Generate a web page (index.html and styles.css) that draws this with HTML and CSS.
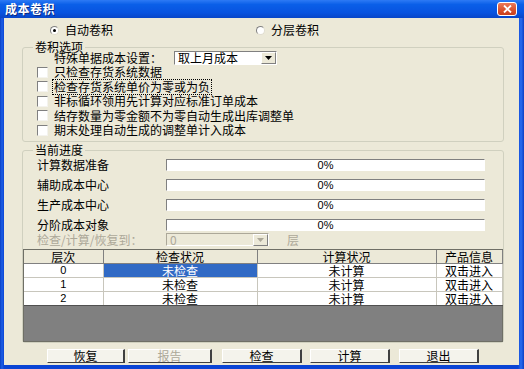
FILE: index.html
```html
<!DOCTYPE html>
<html lang="zh">
<head>
    <meta charset="UTF-8">
    <title>成本卷积</title>
    <link rel="stylesheet" href="styles.css">
</head>
<body>

    <div class="window">
        <!-- Title bar -->
        <div class="titlebar">
            <span class="title">成本卷积</span>
            <span class="close-btn">
                <svg width="9" height="8" viewBox="0 0 9 8"><path d="M1 0.5L8 7.5M8 0.5L1 7.5" stroke="#fff" stroke-width="1.8"/></svg>
            </span>
        </div>

        <div class="client">
            <!-- Mode selection -->
            <div class="mode-row">
                <label class="radio-item first"><span class="radio checked"></span>自动卷积</label>
                <label class="radio-item second"><span class="radio"></span>分层卷积</label>
            </div>

            <!-- Options group -->
            <fieldset class="group options">
                <legend>卷积选项</legend>
                <div class="setting-row">
                    <span class="setting-label">特殊单据成本设置：</span>
                    <div class="combo">
                        <span class="combo-text">取上月成本</span>
                        <span class="combo-arrow"><svg width="7" height="4" viewBox="0 0 7 4"><path d="M0 0H7L3.5 4Z" fill="#000"/></svg></span>
                    </div>
                </div>
                <div class="check-row"><span class="checkbox"></span><span>只检查存货系统数据</span></div>
                <div class="check-row"><span class="checkbox"></span><span class="focused">检查存货系统单价为零或为负</span></div>
                <div class="check-row"><span class="checkbox"></span><span>非标循环领用先计算对应标准订单成本</span></div>
                <div class="check-row"><span class="checkbox"></span><span>结存数量为零金额不为零自动生成出库调整单</span></div>
                <div class="check-row"><span class="checkbox"></span><span>期末处理自动生成的调整单计入成本</span></div>
            </fieldset>

            <!-- Progress group -->
            <fieldset class="group progress">
                <legend>当前进度</legend>
                <div class="progress-row first-row">
                    <span class="progress-label">计算数据准备</span>
                    <div class="bar">0%</div>
                </div>
                <div class="progress-row">
                    <span class="progress-label">辅助成本中心</span>
                    <div class="bar">0%</div>
                </div>
                <div class="progress-row">
                    <span class="progress-label">生产成本中心</span>
                    <div class="bar">0%</div>
                </div>
                <div class="progress-row">
                    <span class="progress-label">分阶成本对象</span>
                    <div class="bar">0%</div>
                </div>
                <div class="level-row">
                    <span class="progress-label">检查/计算/恢复到：</span>
                    <div class="combo disabled">
                        <span class="combo-text">0</span>
                        <span class="combo-arrow"><svg width="7" height="4" viewBox="0 0 7 4"><path d="M0 0H7L3.5 4Z" fill="#ACA899"/></svg></span>
                    </div>
                    <span class="level-unit">层</span>
                </div>

                <div class="grid">
                    <table>
                        <colgroup>
                            <col class="col-level">
                            <col class="col-check">
                            <col class="col-calc">
                            <col class="col-info">
                        </colgroup>
                        <thead>
                            <tr><th>层次</th><th>检查状况</th><th>计算状况</th><th>产品信息</th></tr>
                        </thead>
                        <tbody>
                            <tr><td>0</td><td class="selected">未检查</td><td>未计算</td><td>双击进入</td></tr>
                            <tr><td>1</td><td>未检查</td><td>未计算</td><td>双击进入</td></tr>
                            <tr><td>2</td><td>未检查</td><td>未计算</td><td>双击进入</td></tr>
                        </tbody>
                    </table>
                </div>
            </fieldset>

            <!-- Buttons -->
            <div class="buttons">
                <button class="btn b-restore">恢复</button>
                <button class="btn b-report" disabled>报告</button>
                <button class="btn b-check">检查</button>
                <button class="btn b-calc">计算</button>
                <button class="btn b-exit">退出</button>
            </div>
        </div>
    </div>

</body>
</html>
```

FILE: styles.css
```css
* {
    margin: 0;
    padding: 0;
    box-sizing: border-box;
}

body {
    width: 524px;
    height: 369px;
    overflow: hidden;
    font-family: "Noto Sans CJK SC", "Liberation Sans", sans-serif;
    font-size: 12px;
    line-height: 14px;
    color: #000;
    background: #0842d0;
}

.window {
    width: 524px;
    height: 369px;
    display: flex;
    flex-direction: column;
    background: linear-gradient(90deg, #0a3fc4, #1d5fe6 2px, #0a44d4 4px, #0a44d4 518px, #2a6cf0 521px, #0a3fc4);
}

/* Title bar */
.titlebar {
    height: 18px;
    display: flex;
    align-items: center;
    justify-content: space-between;
    padding: 0 7px 0 5px;
    background: linear-gradient(#2d7af5, #0a5fe8 25%, #0853e0 70%, #0846c8);
}

.title {
    color: #fff;
    font-weight: bold;
    font-size: 12px;
    letter-spacing: 0.5px;
    text-shadow: 1px 1px 0 #0a2a80;
}

.close-btn {
    width: 20px;
    height: 14px;
    display: flex;
    align-items: center;
    justify-content: center;
    background: linear-gradient(#ec7a5a, #d9502c 60%, #c8401e);
    border: 1px solid #fff;
    border-radius: 3px;
}

/* Client area */
.client {
    width: 515px;
    height: 347px;
    margin-left: 4px;
    background: #ece9d8;
}

.mode-row {
    height: 18px;
    margin-top: 3px;
    display: flex;
    align-items: center;
}

.radio-item {
    display: flex;
    align-items: center;
    gap: 6px;
}

.radio-item.first {
    margin-left: 46px;
}

.radio-item.second {
    margin-left: 143px;
}

.radio {
    width: 9px;
    height: 9px;
    border-radius: 50%;
    background: #fff;
    border: 1px solid;
    border-color: #808080 #e0ddd0 #e0ddd0 #808080;
    display: flex;
    align-items: center;
    justify-content: center;
}

.radio.checked::after {
    content: "";
    width: 3px;
    height: 3px;
    border-radius: 50%;
    background: #000;
}

/* Group boxes */
.group {
    width: 482px;
    margin-left: 18px;
    border: 1px solid #d0d0bf;
    border-radius: 3px;
}

.group legend {
    margin-left: 10px;
    padding: 0 2px;
    line-height: 12px;
}

.options {
    margin-top: 2px;
    padding-bottom: 3px;
}

.setting-row {
    height: 14px;
    margin-top: -2px;
    padding-left: 31px;
    display: flex;
    align-items: center;
}

.setting-label {
    width: 120px;
}

.combo {
    width: 103px;
    height: 14px;
    display: flex;
    align-items: center;
    justify-content: space-between;
    background: #fff;
    border: 1px solid;
    border-color: #808080 #fff #fff #808080;
    line-height: 12px;
}

.combo-text {
    padding-left: 3px;
}

.combo-arrow {
    width: 15px;
    height: 12px;
    display: flex;
    align-items: center;
    justify-content: center;
    background: #ece9d8;
    border: 1px solid;
    border-color: #fff #808080 #808080 #fff;
}

.check-row {
    height: 14.5px;
    padding-left: 14px;
    display: flex;
    align-items: center;
}

.checkbox {
    width: 11px;
    height: 11px;
    margin-right: 6px;
    background: #fff;
    border: 1px solid;
    border-color: #808080 #f4f3ee #f4f3ee #808080;
}

.focused {
    outline: 1px dotted #000;
    outline-offset: 0;
    padding: 0 1px;
    margin-left: -1px;
}

/* Progress */
.progress {
    margin-top: 2.5px;
}

.progress-row {
    height: 20px;
    padding-left: 14px;
    display: flex;
    align-items: center;
}

.progress-row.first-row {
    margin-top: -1px;
}

.progress-label {
    width: 129px;
}

.bar {
    width: 319px;
    height: 12px;
    background: #fff;
    border: 1px solid;
    border-color: #808080 #fff #fff #808080;
    text-align: center;
    font-family: "Liberation Sans", sans-serif;
    font-size: 11px;
    line-height: 10px;
}

.level-row {
    height: 13px;
    margin-top: -2px;
    padding-left: 14px;
    display: flex;
    align-items: center;
    color: #aca899;
}

.combo.disabled {
    height: 13px;
    background: #ece9d8;
    border-color: #aca899 #fff #fff #aca899;
    color: #aca899;
}

.level-unit {
    margin-left: 18px;
}

/* Grid */
.grid {
    width: 480px;
    height: 93px;
    margin-top: 3px;
    background: #808080;
    border: 1px solid #6f6f66;
}

.grid table {
    width: 478px;
    table-layout: fixed;
    border-collapse: collapse;
    text-align: center;
    line-height: 13px;
}

.col-level { width: 79px; }
.col-check { width: 154px; }
.col-calc { width: 179px; }
.col-info { width: 66px; }

.grid th {
    font-weight: normal;
    background: #ece9d8;
    border-right: 1px solid #808080;
    border-bottom: 1px solid #808080;
    padding: 0;
}

.grid td {
    background: #fff;
    border-right: 1px solid #c8c6bc;
    border-bottom: 1px solid #c8c6bc;
    padding: 0;
}

.grid td:first-child {
    font-family: "Liberation Sans", sans-serif;
    font-size: 11px;
}

.grid tbody tr:last-child td {
    border-bottom-color: #505050;
}

.grid td.selected {
    background: #316ac5;
    color: #fff;
}

/* Buttons */
.buttons {
    display: flex;
    margin-top: 6px;
    padding-left: 43px;
}

.btn {
    height: 14px;
    font-family: inherit;
    font-size: 12px;
    line-height: 12px;
    background: #f4f3ec;
    color: #000;
    border: 1px solid;
    border-color: #fff #404040 #404040 #fff;
    border-right-width: 2px;
}

.btn:disabled {
    color: #aca899;
}

.b-restore { width: 78px; }
.b-report { width: 84px; margin-left: 3px; }
.b-check { width: 80px; margin-left: 10px; }
.b-calc { width: 80px; margin-left: 8px; }
.b-exit { width: 80px; margin-left: 9px; }
```
